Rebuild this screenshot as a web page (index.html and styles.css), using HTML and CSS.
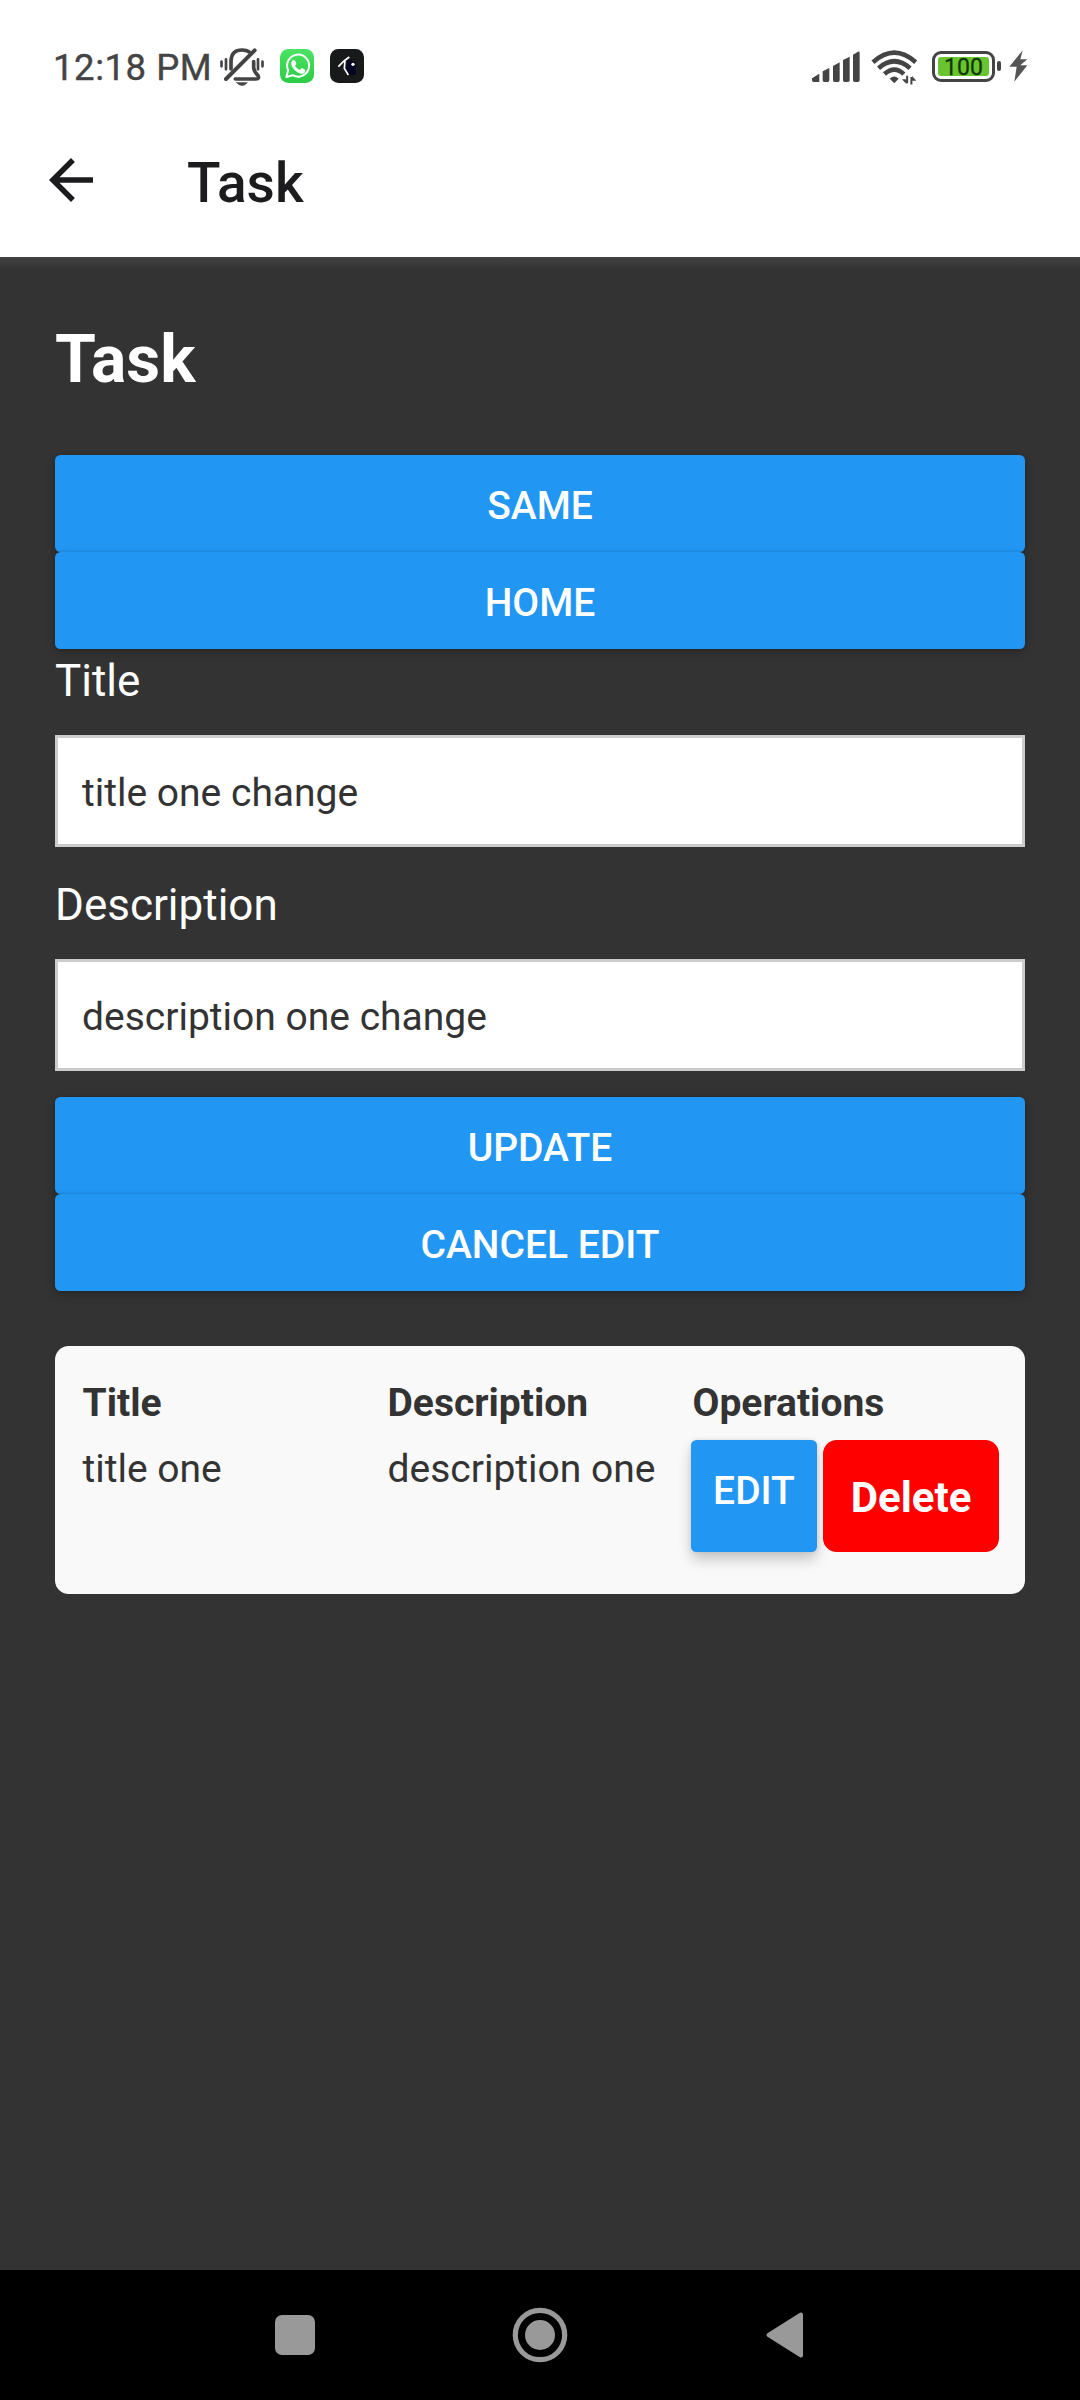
FILE: index.html
```html
<!DOCTYPE html>
<html lang="en">
<head>
<meta charset="utf-8">
<title>Task</title>
<link rel="stylesheet" href="styles.css">
</head>
<body>
<div class="screen">
  <div class="status">
    <span class="clock">12:18 PM</span>
    <svg class="bell" viewBox="540 50 132 120" fill="none" stroke="#444" stroke-linecap="round">
      <path d="M573 116V92Q574 59 606 59Q622 59 632 68M641 94V112Q642 124 653 134Q660 146 648 146H586" stroke-width="11"/>
      <path d="M558 146L644 60" stroke-width="12"/>
      <path d="M544.500 94v14M558 87v30M654 87v30M667.500 94v14" stroke-width="8"/>
      <path d="M590 157H622Q606 174 590 157Z" fill="#444" stroke-width="2"/>
    </svg>
    <svg class="whatsapp" viewBox="720 57 102 102">
      <defs><linearGradient id="wa" x1="0" y1="0" x2="0" y2="1"><stop offset="0" stop-color="#4be364"/><stop offset="1" stop-color="#2ccb45"/></linearGradient></defs>
      <rect x="720" y="57" width="102" height="102" rx="25" fill="url(#wa)"/>
      <path d="M739 141L744.500 121A33 33 0 1 1 758 135.500Z" fill="none" stroke="#fff" stroke-width="6" stroke-linejoin="round"/>
      <path d="M756 93q5-6 10 0l3 8q0 3-4 6q5 9 14 13l5-5q2-1 4 0l8 5q1 9-9 11q-10 2-24-12q-14-15-7-26z" fill="#fff"/>
    </svg>
    <svg class="app" viewBox="870 57 102 102">
      <rect x="870" y="57" width="102" height="102" rx="25" fill="#18191a"/>
      <path d="M922 84L947 98L948 132L933 138L919 119Z" fill="#030523"/>
      <path d="M895 110L912 93L928 81M915 91L913 115L925 135" fill="none" stroke="#fff" stroke-width="5"/>
      <circle cx="939" cy="103" r="5" fill="#fff"/>
    </svg>
    <div class="indicators">
      <svg class="signal" viewBox="64 60 144 102" fill="#444">
        <path d="M64 145L86 131V156H69Q64 156 64 151ZM96 124L116 114V151Q116 156 111 156H101Q96 156 96 151ZM127 108L147 97V151Q147 156 142 156H132Q127 156 127 151ZM157 90L177 80V151Q177 156 172 156H162Q157 156 157 151ZM187 74L202 65Q207 64 207 69V151Q207 156 202 156H192Q187 156 187 151Z"/>
      </svg>
      <svg class="wifi" viewBox="244 58 140 106" fill="none" stroke="#444" stroke-width="14">
        <path d="M250 95Q315 37 380 95M267 113Q315 71 363 113M285 131Q315 104 344 131"/>
        <path d="M301 145Q315 132 328 145L315 159Z" fill="#444" stroke="none"/>
        <path d="M354 136v23M367 163v-23" stroke-width="6"/><path d="M338 147h14v14zM369 137l13 14h-13z" fill="#444" stroke="none"/>
      </svg>
      <div class="battery"><span>100</span></div>
      <div class="nub"></div>
      <svg class="bolt" viewBox="656 62 54 96" fill="#555"><path d="M697 63L657 112H679L672 157L711 108H690L711 90H690Z"/></svg>
    </div>
  </div>
  <header class="appbar">
    <svg class="back" viewBox="0 0 24 24" fill="#1c1c1e"><path d="M20 11H7.830l5.590-5.590L12 4l-8 8 8 8 1.410-1.410L7.830 13H20z"/></svg>
    <span>Task</span>
  </header>
  <main class="content">
    <h1>Task</h1>
    <div class="buttons"><div class="btn">SAME</div><div class="btn">HOME</div></div>
    <div class="label first">Title</div>
    <div class="input" role="textbox">title one change</div>
    <div class="label">Description</div>
    <div class="input" role="textbox">description one change</div>
    <div class="buttons submit"><div class="btn">UPDATE</div><div class="btn">CANCEL EDIT</div></div>
    <section class="card">
      <div class="row head"><span>Title</span><span>Description</span><span>Operations</span></div>
      <div class="row">
        <span>title one</span><span>description one</span>
        <div class="ops"><div class="btn edit">EDIT</div><div class="delete">Delete</div></div>
      </div>
    </section>
  </main>
  <nav class="nav">
    <svg viewBox="0 0 60 60" fill="#999"><rect x="10" y="10" width="40" height="40" rx="7"/></svg>
    <svg viewBox="0 0 60 60" fill="#999"><circle cx="30" cy="30" r="24.700" fill="none" stroke="#999" stroke-width="5.200"/><circle cx="30" cy="30" r="15"/></svg>
    <svg viewBox="0 0 60 60" fill="#999" stroke="#999" stroke-width="4" stroke-linejoin="round"><path d="M13.500 30L46 9.500V50.500Z"/></svg>
  </nav>
</div>
</body>
</html>
```
FILE: styles.css
```css
* { box-sizing: border-box; }
body { margin: 0; font-family: Roboto, sans-serif; background: #333; }
.screen { width: 1080px; height: 2400px; display: flex; flex-direction: column; overflow: hidden; }
svg { display: block; flex: none; }

.status { height: 132px; display: flex; align-items: center; padding: 0 53px 0 53px; background: #fff; flex: none; }
.clock { width: 167px; font-size: 36.5px; letter-spacing: 0.55px; line-height: 44px; color: #444; padding-top: 4px; white-space: nowrap; -webkit-text-stroke: 0.4px #444; }
.bell { width: 44px; height: 40px; margin-top: 1px; }
.whatsapp { width: 34px; height: 34px; margin-left: 16px; }
.app { width: 34px; height: 34px; margin-left: 16px; }
.indicators { display: flex; align-items: center; margin-left: auto; }
.signal { width: 48px; height: 34px; margin-top: 2px; }
.wifi { width: 46px; height: 35px; margin: 2px 15px 0 11px; }
.battery { width: 63px; height: 31px; border: 3.5px solid #444; border-radius: 9px; padding: 3px; }
.battery span { display: block; height: 19px; border-radius: 3px; background: #69c52f; color: #123600; font-size: 23px; line-height: 21px; font-weight: 400; text-align: center; -webkit-text-stroke: 0.3px #123600; }
.nub { width: 4px; height: 10px; background: #444; border-radius: 2px; margin: 0 8px 0 2px; }
.bolt { width: 18px; height: 32px; }

.appbar { height: 125px; flex: none; display: flex; align-items: flex-start; padding: 15px 38px; gap: 83px; background: #fff; }
.back { width: 66px; height: 66px; }
.appbar span { font-size: 55px; line-height: 66px; font-weight: 500; color: #1c1c1e; padding-top: 3px; }

.content { flex: 1; display: flex; flex-direction: column; padding: 63px 55px 0; background: linear-gradient(#424342, #333 12px); }
h1 { margin: 0 0 55px; font-size: 66px; line-height: 80px; font-weight: 700; color: #fff; }
.btn { height: 97px; padding-top: 29px; border-radius: 5.5px; background: #2196f3; color: #fff; font-size: 39px; line-height: 44px; font-weight: 500; text-align: center; box-shadow: 0 4px 10px rgba(0,0,0,.22), 0 0 3px rgba(0,0,0,.12); }
.label { font-size: 44px; line-height: 52px; color: #fff; margin: 32px 0 28px; }
.label.first { margin: 6px 0 28px; }
.input { height: 112px; border: 3px solid #ccc; background: #fff; color: #333; font-size: 39px; line-height: 44px; padding: 33px 24px; }
.submit { margin-top: 26px; }

.card { height: 248px; margin-top: 55px; padding: 35px 27.5px; border-radius: 13.75px; background: #f9f9f9; color: #333; font-size: 39px; line-height: 44px; }
.row { display: grid; grid-template-columns: repeat(3, 305px); align-items: start; }
.row + .row { margin-top: 22px; }
.row span { white-space: nowrap; }
.head { font-weight: 700; }
.ops { display: flex; justify-content: center; gap: 6px; height: 112px; margin: -7px -2px 0; }
.edit { width: 126px; height: 112px; flex: none; box-shadow: 0 8px 14px rgba(0,0,0,.2), 0 0 4px rgba(0,0,0,.1); }
.delete { position: relative; width: 176px; height: 112px; flex: none; border-radius: 13.75px; background: #f00; color: #fff; font-size: 42px; font-weight: 700; line-height: 115px; text-align: center; }

.nav { height: 130px; flex: none; display: flex; align-items: center; justify-content: center; gap: 185px; background: #000; }
.nav svg { width: 60px; height: 60px; }
```
